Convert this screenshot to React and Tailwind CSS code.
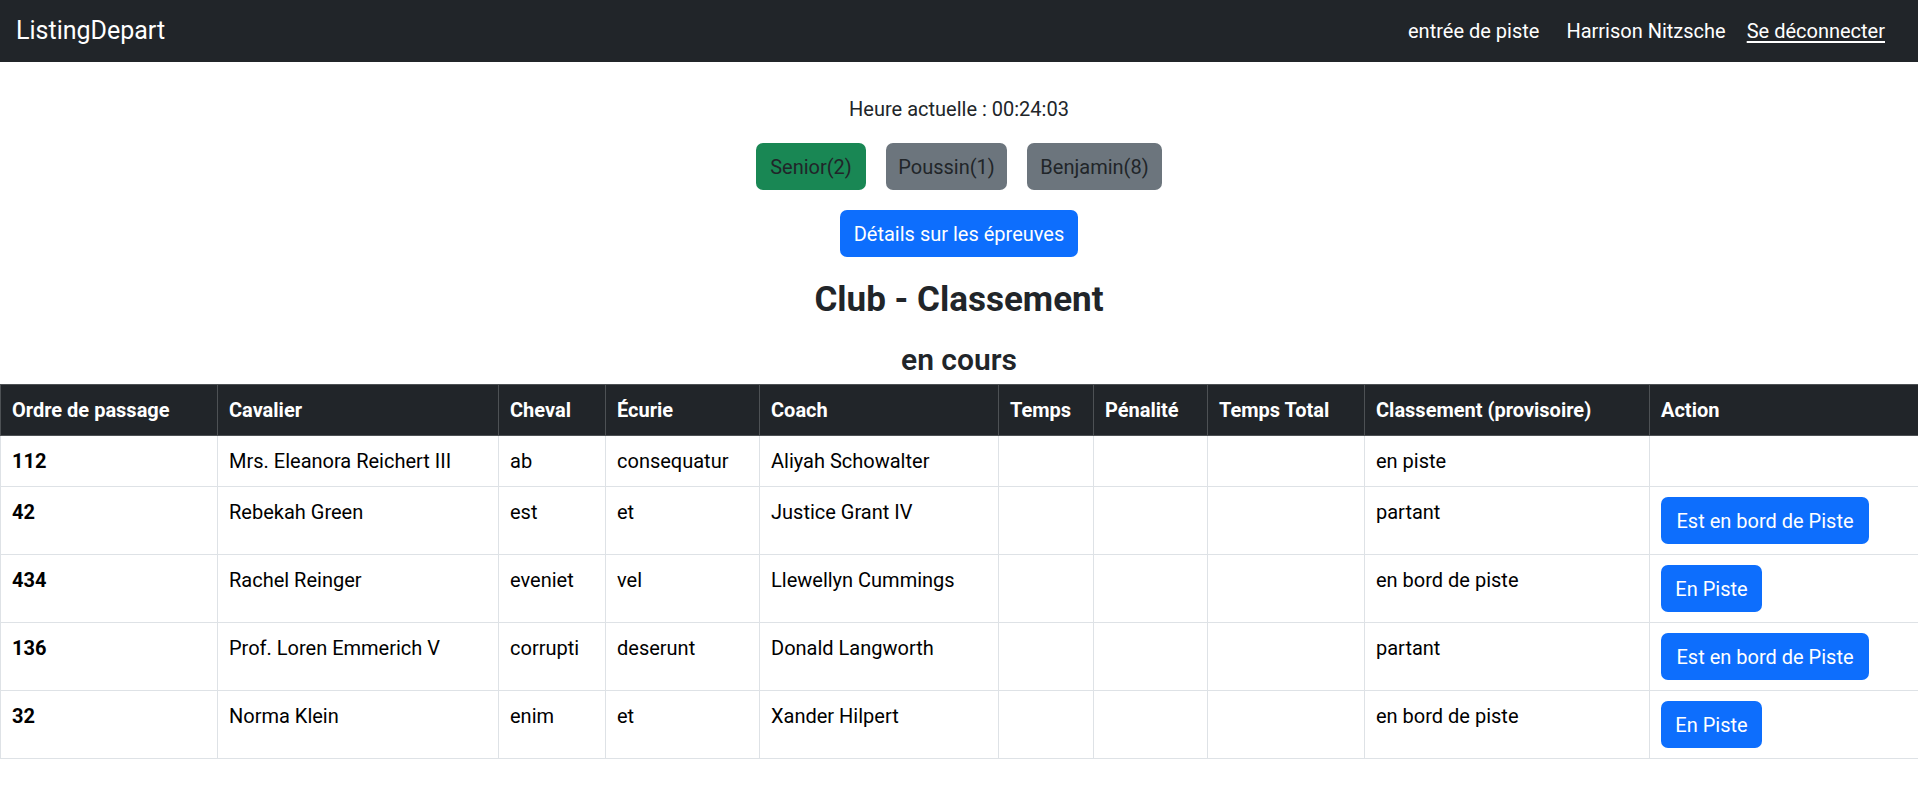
import { useState } from "react";

const rows = [
  { ordre: "112", cavalier: "Mrs. Eleanora Reichert III", cheval: "ab", ecurie: "consequatur", coach: "Aliyah Schowalter", classement: "en piste", action: null },
  { ordre: "42", cavalier: "Rebekah Green", cheval: "est", ecurie: "et", coach: "Justice Grant IV", classement: "partant", action: "Est en bord de Piste" },
  { ordre: "434", cavalier: "Rachel Reinger", cheval: "eveniet", ecurie: "vel", coach: "Llewellyn Cummings", classement: "en bord de piste", action: "En Piste" },
  { ordre: "136", cavalier: "Prof. Loren Emmerich V", cheval: "corrupti", ecurie: "deserunt", coach: "Donald Langworth", classement: "partant", action: "Est en bord de Piste" },
  { ordre: "32", cavalier: "Norma Klein", cheval: "enim", ecurie: "et", coach: "Xander Hilpert", classement: "en bord de piste", action: "En Piste" },
];

const columns = [
  { label: "Ordre de passage", w: "w-[217px]" },
  { label: "Cavalier", w: "w-[281px]" },
  { label: "Cheval", w: "w-[107px]" },
  { label: "Écurie", w: "w-[154px]" },
  { label: "Coach", w: "w-[239px]" },
  { label: "Temps", w: "w-[95px]" },
  { label: "Pénalité", w: "w-[114px]" },
  { label: "Temps Total", w: "w-[157px]" },
  { label: "Classement (provisoire)", w: "w-[285px]" },
  { label: "Action", w: "w-[269px]" },
];

const Navbar = () => (
  <nav className="h-[62px] bg-[#212529] flex items-center justify-between pl-4 pr-[33px]">
    <a className="text-white text-[25px] leading-[38px]">ListingDepart</a>
    <div className="flex items-center text-[20px] text-white">
      <span>entrée de piste</span>
      <span className="ml-[27px]">Harrison Nitzsche</span>
      <a className="ml-[21px] underline underline-offset-[3px]">Se déconnecter</a>
    </div>
  </nav>
);

const App = () => {
  const [category, setCategory] = useState("Senior");

  const categories = [
    { id: "Senior", label: "Senior(2)", w: "w-[110px]" },
    { id: "Poussin", label: "Poussin(1)", w: "w-[121px]" },
    { id: "Benjamin", label: "Benjamin(8)", w: "w-[135px]" },
  ];

  return (
    <div className="min-h-screen bg-white text-[#212529]" style={{ fontFamily: "Roboto, 'Noto Sans', sans-serif" }}>
      <Navbar />
      <div className="flex flex-col items-center pt-[32px]">
        <p className="text-[20px] leading-[30px]">Heure actuelle : 00:24:03</p>
        <div className="flex gap-[20px] mt-[19px]">
          {categories.map((c) => (
            <button
              key={c.id}
              onClick={() => setCategory(c.id)}
              className={`${c.w} h-[47px] rounded-[7px] text-[20px] text-[#212529] ${
                category === c.id ? "bg-[#198754]" : "bg-[#6c757d]"
              }`}
            >
              {c.label}
            </button>
          ))}
        </div>
        <button className="mt-[20px] w-[238px] h-[47px] rounded-[7px] bg-[#0d6efd] text-white text-[20px]">
          Détails sur les épreuves
        </button>
        <h3 className="mt-[22px] text-[35px] leading-[42px] font-bold">Club - Classement</h3>
        <h4 className="mt-[21px] text-[30px] leading-[36px] font-semibold">en cours</h4>
      </div>
      <table className="mt-[6px] w-full table-fixed border-collapse text-[20px] leading-[30px]">
        <colgroup>
          {columns.map((col) => (
            <col key={col.label} className={col.w} />
          ))}
        </colgroup>
        <thead>
          <tr className="bg-[#212529] text-white">
            {columns.map((col) => (
              <th
                key={col.label}
                className="border border-[#4d5154] text-left font-bold px-[11px] pt-[10px] pb-[10px] align-top whitespace-nowrap"
              >
                {col.label}
              </th>
            ))}
          </tr>
        </thead>
        <tbody>
          {rows.map((r) => (
            <tr key={r.ordre}>
              <td className="border border-[#dee2e6] px-[11px] py-[10px] align-top font-bold text-black">{r.ordre}</td>
              <td className="border border-[#dee2e6] px-[11px] py-[10px] align-top text-black">{r.cavalier}</td>
              <td className="border border-[#dee2e6] px-[11px] py-[10px] align-top text-black">{r.cheval}</td>
              <td className="border border-[#dee2e6] px-[11px] py-[10px] align-top text-black">{r.ecurie}</td>
              <td className="border border-[#dee2e6] px-[11px] py-[10px] align-top text-black">{r.coach}</td>
              <td className="border border-[#dee2e6] px-[11px] py-[10px] align-top"></td>
              <td className="border border-[#dee2e6] px-[11px] py-[10px] align-top"></td>
              <td className="border border-[#dee2e6] px-[11px] py-[10px] align-top"></td>
              <td className="border border-[#dee2e6] px-[11px] py-[10px] align-top text-black">{r.classement}</td>
              <td className="border border-[#dee2e6] px-[11px] py-[10px] align-top">
                {r.action && (
                  <button
                    className={`${
                      r.action === "En Piste" ? "w-[101px]" : "w-[208px]"
                    } h-[47px] rounded-[7px] bg-[#0d6efd] text-white text-[20px] block`}
                  >
                    {r.action}
                  </button>
                )}
              </td>
            </tr>
          ))}
        </tbody>
      </table>
    </div>
  );
};

export default App;
